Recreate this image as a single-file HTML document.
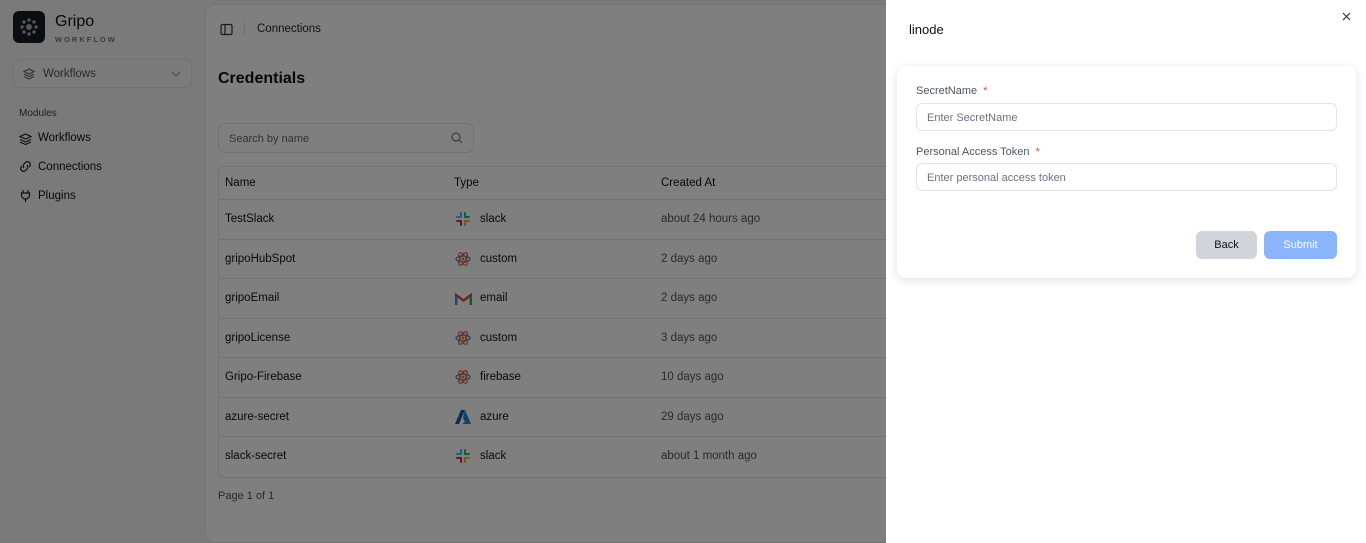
<!DOCTYPE html>
<html><head><meta charset="utf-8"><style>
*{box-sizing:border-box;margin:0;padding:0}
html,body{width:1366px;height:543px;overflow:hidden}
body{font-family:"Liberation Sans",sans-serif;background:#f4f4f5;position:relative;color:#111}
.side{position:absolute;left:0;top:0;width:204px;height:543px;background:#f4f4f5}
.logo{position:absolute;left:13px;top:11px;width:32px;height:32px;background:#151a23;border-radius:6px}
.main{position:absolute;left:205px;top:4px;width:1161px;height:539px;background:#fff;border:1px solid #e4e4e7;border-radius:10px}
.ov{position:absolute;left:0;top:0;width:1366px;height:543px;background:rgba(0,0,0,0.5)}
.panel{position:absolute;left:886px;top:0;width:480px;height:543px;background:#fff}
.tbl{position:absolute;left:218px;top:166px;width:720px;border:1px solid #e4e4e7;border-radius:6px;overflow:hidden}
.row{height:39.5px;border-bottom:1px solid #e4e4e7;position:relative;font-size:11.5px}
.row span{position:absolute;top:13px}
.row svg{position:absolute;left:236px;top:11px}
.inp{position:absolute;left:19px;width:421px;height:28px;border:1px solid #e4e4e7;border-radius:6px;font-size:11px;color:#6b7280;padding:8px 0 0 10px}
.lbl{position:absolute;left:19px;font-size:11px;color:#4b5563}
.lbl b{color:#ef4444;font-weight:normal;margin-left:6px}
</style></head><body>
<svg width="0" height="0" style="position:absolute"><defs>
<g id="sl"><rect x="1" y="5" width="6" height="2" rx="1" fill="#36c5f0"/><rect x="5" y="1" width="2" height="5" rx="1" fill="#36c5f0"/><rect x="9" y="1" width="2" height="6" rx="1" fill="#2eb67d"/><rect x="9" y="5" width="6" height="2" rx="1" fill="#2eb67d"/><rect x="9" y="9" width="6" height="2" rx="1" fill="#ecb22e"/><rect x="9" y="9" width="2" height="6" rx="1" fill="#ecb22e"/><rect x="5" y="9" width="2" height="6" rx="1" fill="#e01e5a"/><rect x="1" y="9" width="6" height="2" rx="1" fill="#e01e5a"/></g>
<g id="at" fill="none" stroke-width="1.2"><ellipse cx="8" cy="8" rx="7" ry="3" stroke="#3b82c4"/><ellipse cx="8" cy="8" rx="7" ry="3" stroke="#e8773c" transform="rotate(60 8 8)"/><ellipse cx="8" cy="8" rx="7" ry="3" stroke="#d9534f" transform="rotate(-60 8 8)"/><circle cx="8" cy="8" r="1.5" fill="#e8773c" stroke="none"/></g>
</defs></svg>
<div class="side">
<div class="logo"><svg width="32" height="32"><g fill="#aaa"><circle cx="16" cy="16" r="3"/><circle cx="16" cy="9" r="1.7"/><circle cx="16" cy="23" r="1.7"/><circle cx="9" cy="16" r="1.7"/><circle cx="23" cy="16" r="1.7"/><circle cx="11" cy="11" r="1.7"/><circle cx="21" cy="11" r="1.7"/><circle cx="11" cy="21" r="1.7"/><circle cx="21" cy="21" r="1.7"/></g></svg></div>
<div style="position:absolute;left:55px;top:13px;font-size:16px;color:#111">Gripo</div>
<div style="position:absolute;left:55px;top:35px;font-size:7.5px;letter-spacing:2px;color:#777;font-weight:bold">WORKFLOW</div>
<div style="position:absolute;left:13px;top:59px;width:179px;height:29px;border:1px solid #e4e4e7;border-radius:6px;background:#f7f7f8;font-size:11.5px;color:#555;padding:8px 0 0 29px">Workflows<svg style="position:absolute;right:10px;top:10px" width="10" height="8" fill="none" stroke="#999" stroke-width="1.2"><path d="M1 2l4 4 4-4"/></svg><svg style="position:absolute;left:9px;top:8px" width="12" height="12" fill="none" stroke="#666" stroke-width="1.2"><path d="M6 1L11 3.5L6 6L1 3.5Z M1 6L6 8.5L11 6 M1 8.5L6 11L11 8.5"/></svg></div>
<div style="position:absolute;left:19px;top:108px;font-size:10px;color:#444">Modules</div>
<div style="position:absolute;left:38px;top:132px;font-size:11.5px">Workflows</div>
<div style="position:absolute;left:38px;top:161px;font-size:11.5px">Connections</div>
<div style="position:absolute;left:38px;top:190px;font-size:11.5px">Plugins</div>
<svg style="position:absolute;left:19px;top:133px" width="13" height="80" fill="none" stroke="#222" stroke-width="1.2"><path d="M6.5 1L12 3.5L6.5 6L1 3.5Z M1 6.5L6.5 9L12 6.5 M1 9L6.5 11.5L12 9"/><path d="M5 35a3 3 0 0 1 0-4l2-2a3 3 0 0 1 4 4l-1 1 M8 32a3 3 0 0 1 0 4l-2 2a3 3 0 0 1-4-4l1-1"/><path d="M4 57v3 M9 57v3 M2.5 60h8v2a4 4 0 0 1-8 0z M6.5 66v3"/></svg>
</div>
<div class="main">
<svg style="position:absolute;left:14px;top:18px" width="13" height="13" fill="none" stroke="#333" stroke-width="1.2"><rect x="1" y="1.5" width="11" height="10" rx="1.5"/><path d="M5 1.5v10"/></svg>
<div style="position:absolute;left:38px;top:17px;width:1px;height:14px;background:#ddd"></div>
<div style="position:absolute;left:51px;top:18px;font-size:11.5px;color:#222">Connections</div>
<div style="position:absolute;left:12px;top:65px;font-size:16px;font-weight:bold">Credentials</div>
<div style="position:absolute;left:12px;top:118px;width:256px;height:30px;border:1px solid #e4e4e7;border-radius:7px;font-size:11px;color:#666;padding:9px 0 0 10px">Search by name<svg style="position:absolute;right:10px;top:8px" width="12" height="12" fill="none" stroke="#777" stroke-width="1.2"><circle cx="5" cy="5" r="4"/><path d="M8 8l3 3"/></svg></div>
</div>
<div class="tbl">
<div class="row" style="height:33px"><span style="left:6px;top:10px">Name</span><span style="left:235px;top:10px">Type</span><span style="left:442px;top:10px">Created At</span></div>
<div class="row"><span style="left:6px">TestSlack</span><svg width="16" height="16"><use href="#sl"/></svg><span style="left:261px">slack</span><span style="left:442px;color:#555">about 24 hours ago</span></div>
<div class="row"><span style="left:6px">gripoHubSpot</span><svg width="16" height="16"><use href="#at"/></svg><span style="left:261px">custom</span><span style="left:442px;color:#555">2 days ago</span></div>
<div class="row"><span style="left:6px">gripoEmail</span><svg width="17" height="14" style="top:13px"><path d="M1 13V3l7.5 5.5L16 3v10" fill="none" stroke="#ea4335" stroke-width="2.5"/><path d="M1 4v9" stroke="#4285f4" stroke-width="2.5"/><path d="M16 4v9" stroke="#34a853" stroke-width="2.5"/></svg><span style="left:261px">email</span><span style="left:442px;color:#555">2 days ago</span></div>
<div class="row"><span style="left:6px">gripoLicense</span><svg width="16" height="16"><use href="#at"/></svg><span style="left:261px">custom</span><span style="left:442px;color:#555">3 days ago</span></div>
<div class="row"><span style="left:6px">Gripo-Firebase</span><svg width="16" height="16"><use href="#at"/></svg><span style="left:261px">firebase</span><span style="left:442px;color:#555">10 days ago</span></div>
<div class="row"><span style="left:6px">azure-secret</span><svg width="16" height="16"><path d="M6 1h4l-6 14H0z" fill="#0a5fb0"/><path d="M10 1l6 14H7l3-2-2-4z" fill="#1a8ad4"/></svg><span style="left:261px">azure</span><span style="left:442px;color:#555">29 days ago</span></div>
<div class="row" style="border-bottom:none"><span style="left:6px">slack-secret</span><svg width="16" height="16"><use href="#sl"/></svg><span style="left:261px">slack</span><span style="left:442px;color:#555">about 1 month ago</span></div>
</div>
<div style="position:absolute;left:218px;top:490px;font-size:11px;color:#555">Page 1 of 1</div>
<div class="ov"></div>
<div class="panel">
<div style="position:absolute;left:23px;top:22px;font-size:13px;color:#111">linode</div>
<svg style="position:absolute;left:456px;top:12px" width="9" height="9" stroke="#333" stroke-width="1.2"><path d="M1 1l7 7M8 1l-7 7"/></svg>
<div style="position:absolute;left:11px;top:66px;width:459px;height:212px;background:#fff;border-radius:9px;box-shadow:0 2px 10px rgba(0,0,0,0.12)">
<div class="lbl" style="top:19px">SecretName<b>*</b></div>
<div class="inp" style="top:37px">Enter SecretName</div>
<div class="lbl" style="top:80px">Personal Access Token<b>*</b></div>
<div class="inp" style="top:97px">Enter personal access token</div>
<div style="position:absolute;left:299px;top:165px;width:61px;height:28px;background:#d1d5db;border-radius:6px;font-size:11px;text-align:center;padding-top:8px">Back</div>
<div style="position:absolute;left:367px;top:165px;width:73px;height:28px;background:#8ab4fb;border-radius:6px;font-size:11px;color:#fff;text-align:center;padding-top:8px">Submit</div>
</div>
</div>
</body></html>
